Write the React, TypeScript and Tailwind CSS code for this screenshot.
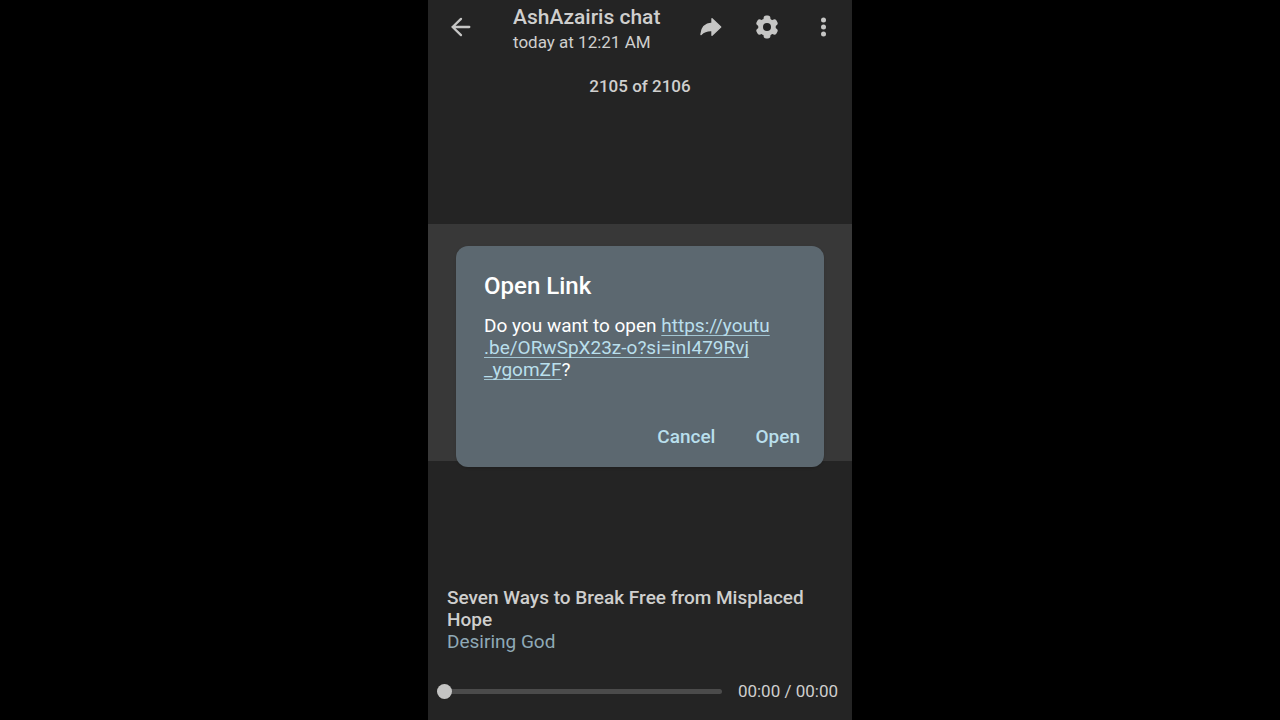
import { useState } from "react";

const ICON_BUTTON = "flex size-10 shrink-0 items-center justify-center text-[#c6c6c5]";

const BackIcon = () => (
  <svg
    className="size-6"
    viewBox="0 0 24 24"
    fill="none"
    stroke="currentColor"
    strokeWidth="2.3"
    strokeLinecap="round"
    strokeLinejoin="round"
    aria-hidden="true"
  >
    <path d="M20.3 12H3.5M12 3.9L3.6 12l8.4 8.1" />
  </svg>
);

const ForwardIcon = () => (
  <svg
    className="size-6"
    viewBox="0 0 24 24"
    fill="currentColor"
    stroke="currentColor"
    strokeWidth="1.4"
    strokeLinejoin="round"
    aria-hidden="true"
  >
    <path d="M13 3.8L21.7 12 13 20.2v-4.6c-4.8-.3-8 .8-11 3.8C2.4 12.8 6.2 8.7 13 8.2z" />
  </svg>
);

const SettingsIcon = () => (
  <svg className="size-6" viewBox="0 0 24 24" fill="currentColor" aria-hidden="true">
    <mask id="gear-hole">
      <rect width="24" height="24" fill="white" />
      <circle cx="12" cy="12" r="4" fill="black" />
    </mask>
    <g mask="url(#gear-hole)">
      <circle cx="12" cy="12" r="8.8" />
      <rect x="8.6" y="0.6" width="6.8" height="22.8" rx="2.6" />
      <rect x="8.6" y="0.6" width="6.8" height="22.8" rx="2.6" transform="rotate(60 12 12)" />
      <rect x="8.6" y="0.6" width="6.8" height="22.8" rx="2.6" transform="rotate(120 12 12)" />
    </g>
  </svg>
);

const MoreIcon = () => (
  <svg className="size-6" viewBox="0 0 24 24" fill="currentColor" aria-hidden="true">
    <circle cx="12.5" cy="5" r="2.5" />
    <circle cx="12.5" cy="12" r="2.5" />
    <circle cx="12.5" cy="19" r="2.5" />
  </svg>
);

const Header: React.FC = () => (
  <header className="flex h-[54px] items-center pl-[13px] pr-[9px]">
    <button type="button" aria-label="Back" className={ICON_BUTTON}>
      <BackIcon />
    </button>
    <div className="ml-8 min-w-0 flex-1 pt-1">
      <h1 className="truncate text-[21px] font-medium leading-[26px]">AshAzairis chat</h1>
      <p className="text-[17px] leading-6">today at 12:21 AM</p>
    </div>
    <div className="flex gap-4">
      <button type="button" aria-label="Forward" className={ICON_BUTTON}>
        <ForwardIcon />
      </button>
      <button type="button" aria-label="Settings" className={ICON_BUTTON}>
        <SettingsIcon />
      </button>
      <button type="button" aria-label="More options" className={ICON_BUTTON}>
        <MoreIcon />
      </button>
    </div>
  </header>
);

interface OpenLinkDialogProps {
  onClose: () => void;
}

const OpenLinkDialog: React.FC<OpenLinkDialogProps> = ({ onClose }) => (
  <div className="absolute inset-0 flex items-center px-7 pb-2">
    <div
      role="dialog"
      aria-labelledby="dialog-title"
      className="w-full rounded-xl bg-[#5c6870] px-7 pb-[9px] pt-6 text-white shadow-sm"
    >
      <h2 id="dialog-title" className="text-[24px] font-medium leading-8">
        Open Link
      </h2>
      <p className="mt-[13px] text-[19px] leading-[22px]">
        Do you want to open{" "}
        <a
          href="https://youtu.be/ORwSpX23z-o?si=inI479Rvj_ygomZF"
          className="text-[#b9dfec] underline decoration-[#a3c6d3] decoration-1 underline-offset-3 [text-decoration-skip-ink:none]"
        >
          https://youtu
          <wbr />
          .be/ORwSpX23z-o?si=inI479Rvj
          <wbr />
          _ygomZF
        </a>
        ?
      </p>
      <div className="-mr-4 mt-[37px] flex justify-end gap-4 text-[19px] font-medium text-[#b9dfec]">
        <button type="button" className="h-10 px-3" onClick={onClose}>
          Cancel
        </button>
        <button type="button" className="h-10 px-3" onClick={onClose}>
          Open
        </button>
      </div>
    </div>
  </div>
);

const Player: React.FC = () => {
  const [position, setPosition] = useState(0);

  return (
    <div className="flex h-[58px] items-center gap-4 pl-[9px] pr-[14px]">
      <input
        type="range"
        aria-label="Playback position"
        min={0}
        max={100}
        value={position}
        onChange={(e) => setPosition(Number(e.target.value))}
        className="h-[15px] min-w-0 flex-1 appearance-none bg-transparent [&::-webkit-slider-runnable-track]:h-[5px] [&::-webkit-slider-runnable-track]:rounded-full [&::-webkit-slider-runnable-track]:bg-[#4b4b4b] [&::-webkit-slider-thumb]:-mt-[5px] [&::-webkit-slider-thumb]:size-[15px] [&::-webkit-slider-thumb]:appearance-none [&::-webkit-slider-thumb]:rounded-full [&::-webkit-slider-thumb]:bg-[#c4c4c3]"
      />
      <span className="text-[17px] leading-6">00:00 / 00:00</span>
    </div>
  );
};

export default function App() {
  const [dialogOpen, setDialogOpen] = useState(true);

  return (
    <div className="flex min-h-screen justify-center bg-black font-[Roboto,sans-serif]">
      <main className="relative flex w-full max-w-[424px] flex-col bg-[#242424] text-[#cfcfce]">
        <Header />
        <p className="pt-5 text-center text-[17px] font-medium leading-6">2105 of 2106</p>
        <div className="mt-[126px] aspect-[424/237] bg-[#383838]" />
        <section className="mt-auto pb-[9px] pl-[19px] pr-8 text-[19px] leading-[22px]">
          <h2 className="font-medium">Seven Ways to Break Free from Misplaced Hope</h2>
          <p className="text-[#8fa9b6]">Desiring God</p>
        </section>
        <Player />
        {dialogOpen && <OpenLinkDialog onClose={() => setDialogOpen(false)} />}
      </main>
    </div>
  );
}
